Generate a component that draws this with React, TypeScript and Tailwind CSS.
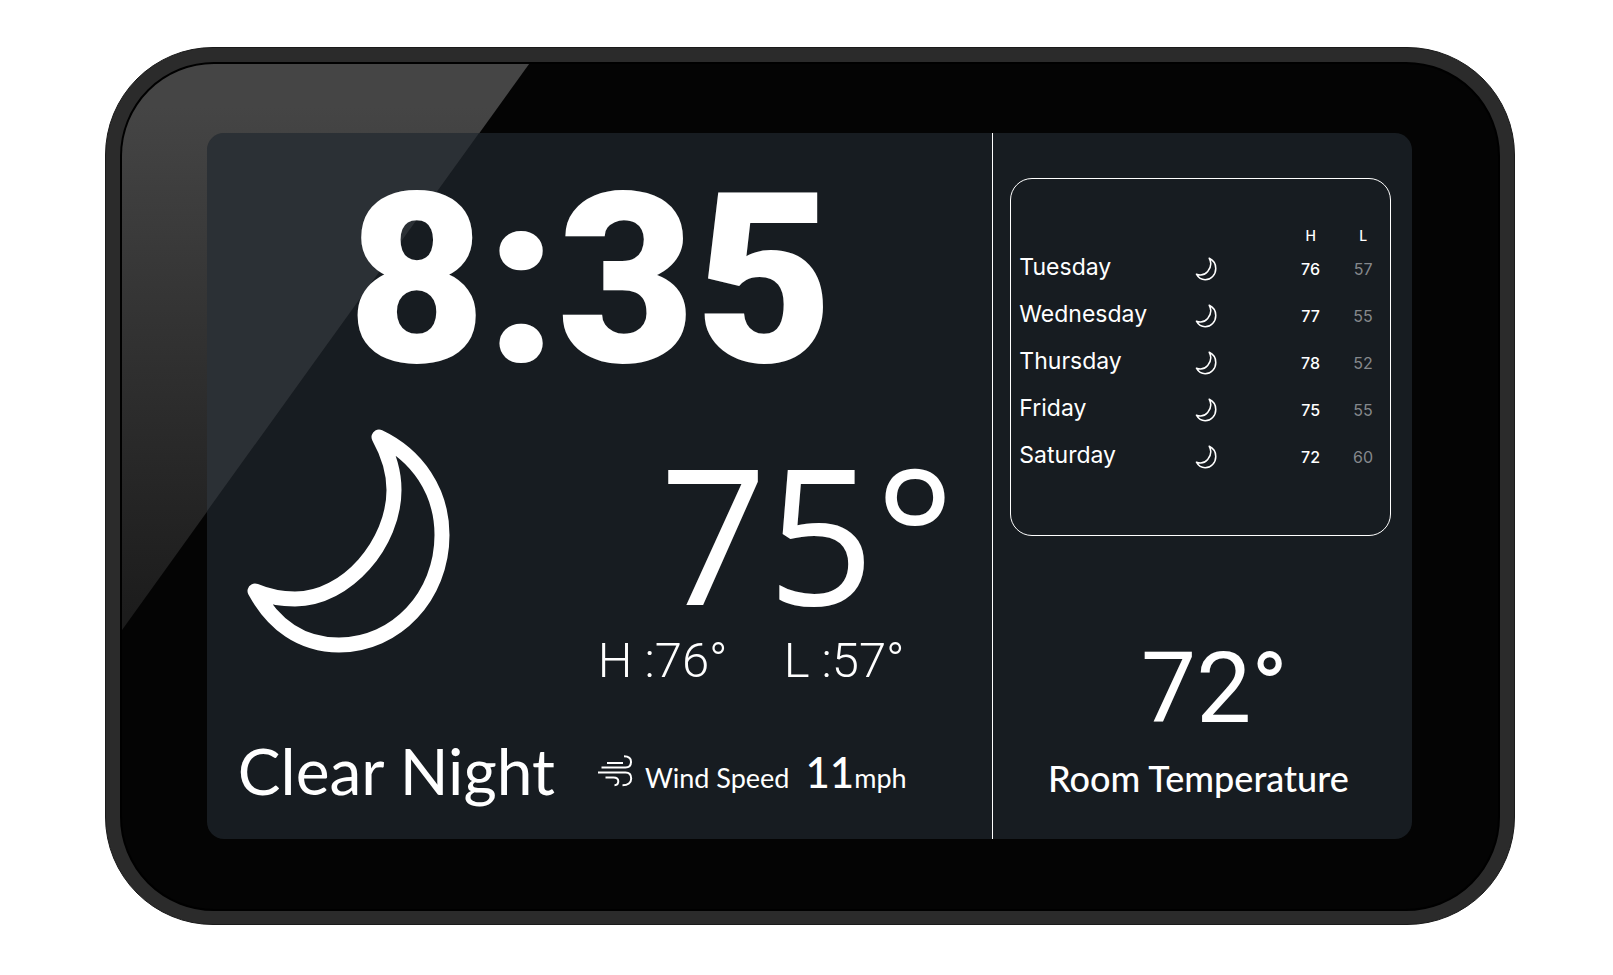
const MOON =
  "M138 12C176 30 201 66 201 110C201 171 155 220 98 220C60 220 32 199 14 166C28 172 41 174 54 174C106 174 153 118 153 65C153 46 148 30 138 12Z";

const days = [
  { day: "Tuesday", high: 76, low: 57 },
  { day: "Wednesday", high: 77, low: 55 },
  { day: "Thursday", high: 78, low: 52 },
  { day: "Friday", high: 75, low: 55 },
  { day: "Saturday", high: 72, low: 60 },
];

function Moon({ className }: { className: string }) {
  return (
    <svg viewBox="0 0 213 232" fill="none" stroke="currentColor" strokeWidth="15" strokeLinejoin="round" className={className} role="img" aria-label="Clear night">
      <path d={MOON} />
    </svg>
  );
}

function WindIcon() {
  return (
    <svg viewBox="0 0 36 32" fill="none" stroke="currentColor" strokeWidth="2" className="mb-2 h-8 w-9 shrink-0" aria-hidden="true">
      <path d="M10 8H26" />
      <path d="M4.500 12.500H28.500C32.500 12.500 34 9.800 34 6.800C34 3.500 31.500 1.200 27 1.200" />
      <path d="M1 17.500H28.500C32.500 17.500 34.200 20.200 34.200 23.500C34.200 27.500 31 30.300 25.500 30.300" />
      <path d="M8.500 22.500H16.500C20 22.500 21.300 24.200 21.300 26.300C21.300 28.700 19.800 30.200 17.500 30.300" />
    </svg>
  );
}

function Forecast() {
  return (
    <section className="h-[358px] rounded-[22px] border border-white pt-[49px] font-['Inter',sans-serif]">
      <table className="w-full table-fixed border-collapse">
        <thead>
          <tr className="h-4 text-sm leading-4 font-medium">
            <th className="w-[172px]" aria-label="Day" />
            <th aria-label="Conditions" />
            <th className="w-[52px] font-medium">H</th>
            <th className="w-[53px] font-medium">L</th>
          </tr>
        </thead>
        <tbody>
          {days.map((d) => (
            <tr key={d.day} className="h-[47px]">
              <th scope="row" className="pb-0.5 pl-2 text-left text-[23px] leading-8 font-normal">{d.day}</th>
              <td className="pt-0.5"><Moon className="ml-[12px] h-6 w-[22px]" /></td>
              <td className="pt-0.5 text-center text-base font-medium">{d.high}</td>
              <td className="pt-0.5 text-center text-base text-[#85888c]">{d.low}</td>
            </tr>
          ))}
        </tbody>
      </table>
    </section>
  );
}

export default function App() {
  return (
    <div className="flex min-h-screen items-start bg-white pt-[47px] pr-[6.1%] pb-[50px] pl-[6.5%] font-['Lato',sans-serif] text-white">
      <div className="w-full rounded-[108px] border border-[#1a1a1a] bg-[#2b2b2b] p-[14px] pb-[13px]">
        <div className="relative overflow-hidden rounded-[94px] border-2 border-black bg-[#040404] pt-[69px] pr-[86px] pb-[70px] pl-[85px]">
          <div className="absolute inset-0 bg-linear-to-b from-[#454545] from-5% to-[#1c1c1c] to-65% [clip-path:polygon(0_0,29.6%_0,0_67%)]" />
          <main className="relative flex min-h-[706px] overflow-hidden rounded-[17px] bg-[#171c21]">
            <div className="absolute inset-0 bg-white/9 [clip-path:polygon(0_0,22.6%_0,0_53.6%)]" />
            <section className="relative flex w-[65.2%] shrink-0 flex-col">
              <h1 className="pt-1 pl-[141px] font-['Roboto',sans-serif] text-[238px] leading-[288px] font-black">8:35</h1>
              <div className="flex pl-[34px]">
                <Moon className="h-[232px] w-[213px] shrink-0" />
                <div className="pt-[10px] pl-[144px]">
                  <p className="pl-[62px] font-['Open_Sans',sans-serif] text-[188px] leading-[194px]">75°</p>
                  <p className="flex gap-[56px] font-['Roboto',sans-serif] text-[49px] leading-[64px] font-light">
                    <span>H :76°</span>
                    <span>L :57°</span>
                  </p>
                </div>
              </div>
              <div className="mt-auto flex items-center pb-[30px] pl-[31px]">
                <p className="text-[64px] leading-[76px]">Clear Night</p>
                <div className="flex items-center pt-2 pl-[42px]">
                  <WindIcon />
                  <p className="pl-[12px] text-[27px] leading-[48px]">
                    Wind Speed
                    <span className="pl-4 text-[42px] font-medium">11</span>mph
                  </p>
                </div>
              </div>
            </section>
            <aside className="relative min-w-0 grow border-l border-white pt-[45px] pr-[21px] pl-[17px]">
              <Forecast />
              <div className="pt-[104px] text-center">
                <p className="pl-7 font-['Roboto',sans-serif] text-[98px] leading-[98px]">72°</p>
                <p className="pt-[18px] pr-1 text-[36px] leading-[44px] font-medium">Room Temperature</p>
              </div>
            </aside>
          </main>
        </div>
      </div>
    </div>
  );
}
